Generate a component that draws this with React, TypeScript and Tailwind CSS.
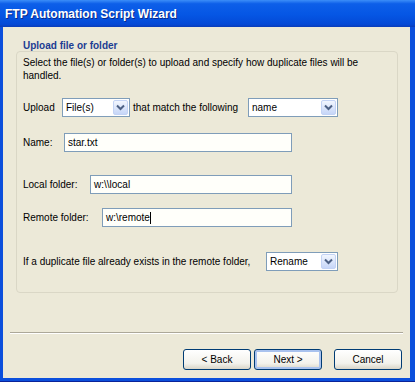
import React from 'react';

const font = { fontFamily: '"Liberation Sans", Arial, sans-serif' };

function Chevron() {
  return (
    <svg width="9" height="7" viewBox="0 0 9 7">
      <path d="M1 1.5 L4.5 5 L8 1.5" fill="none" stroke="#4d6185" strokeWidth="2" />
    </svg>
  );
}

function Combo({ value, width }: { value: string; width: string }) {
  return (
    <div className={`${width} h-[19px] flex items-center border border-[#7f9db9] bg-white pl-[3px] pr-[1px]`}>
      <span className="flex-1 text-[10px] text-black leading-none">{value}</span>
      <div className="w-[15px] h-[15px] flex items-center justify-center rounded-[2px] border border-[#c3d3f5] bg-[linear-gradient(to_bottom,#f2f6fe,#c6d6f8)]">
        <Chevron />
      </div>
    </div>
  );
}

function TextBox({ value, width, caret }: { value: string; width: string; caret?: boolean }) {
  return (
    <div className={`${width} h-[19px] flex items-center border border-[#7f9db9] bg-[#fffffa] pl-[3px]`}>
      <span className="text-[10px] text-black leading-none">{value}</span>
      {caret && <span className="w-px h-[12px] bg-black" />}
    </div>
  );
}

function XpButton({ label, focused }: { label: string; focused?: boolean }) {
  return (
    <div
      className={`w-[68px] h-[21px] flex items-center justify-center rounded-[3px] border border-[#003c74] bg-[linear-gradient(to_bottom,#ffffff,#f3f2ec_70%,#d9d5c8)] text-[10px] text-black ${
        focused ? 'shadow-[inset_0_0_0_2px_#a9c2ee]' : ''
      }`}
    >
      {label}
    </div>
  );
}

export default function App() {
  return (
    <div className="w-[415px] h-[382px] flex flex-col bg-[#0b4fdc] border-b border-[#0a2399]" style={font}>
      {/* title bar */}
      <div className="h-[27px] flex items-center pl-[5px] bg-[linear-gradient(to_bottom,#3c8ef8_0%,#0d5fe9_14%,#0556e4_55%,#0449d6_90%,#0a3cb8_100%)]">
        <span className="text-white font-bold text-[12px] [text-shadow:1px_1px_0_#0a2a8a]">FTP Automation Script Wizard</span>
      </div>

      {/* client area */}
      <div className="flex-1 ml-[3px] mr-[5px] mb-[3px] bg-[#ece9d8] flex flex-col pt-[12px]">
        <div className="pl-[20px] h-[13px] text-[10px] leading-[13px] font-bold text-[#1c3d93]">Upload file or folder</div>

        <div className="ml-[13px] w-[382px] h-[242px] -mt-px rounded-[4px] border border-[#dad7c6] pt-[4px] pl-[6px] text-[10px] text-black">
          <p className="leading-[13px] pr-[20px]">
            Select the file(s) or folder(s) to upload and specify how duplicate files will be handled.
          </p>

          <div className="mt-[16px] flex items-center">
            <span className="w-[39px]">Upload</span>
            <Combo value="File(s)" width="w-[68px]" />
            <span className="w-[118px] pl-[3px]">that match the following</span>
            <Combo value="name" width="w-[90px]" />
          </div>

          <div className="mt-[16px] flex items-center">
            <span className="w-[41px]">Name:</span>
            <TextBox value="star.txt" width="w-[228px]" />
          </div>

          <div className="mt-[23px] flex items-center">
            <span className="w-[67px]">Local folder:</span>
            <TextBox value={'w:\\\\local'} width="w-[202px]" />
          </div>

          <div className="mt-[14px] flex items-center">
            <span className="w-[79px]">Remote folder:</span>
            <TextBox value={'w:\\remote'} width="w-[190px]" caret />
          </div>

          <div className="mt-[25px] flex items-center">
            <span className="w-[243px]">If a duplicate file already exists in the remote folder,</span>
            <Combo value="Rename" width="w-[72px]" />
          </div>
        </div>

        {/* separator */}
        <div className="mt-[39px] ml-[7px] w-[393px] border-t border-[#aca899] border-b border-b-white" />

        <div className="mt-[15px] flex justify-end pr-[8px]">
          <XpButton label="< Back" />
          <div className="ml-[3px]">
            <XpButton label="Next >" focused />
          </div>
          <div className="ml-[12px]">
            <XpButton label="Cancel" />
          </div>
        </div>
      </div>
    </div>
  );
}
